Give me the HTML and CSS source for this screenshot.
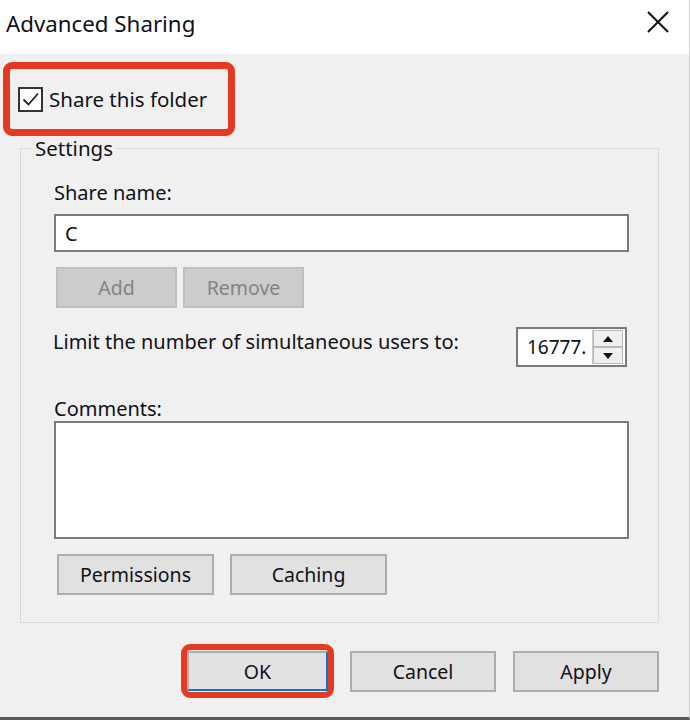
FILE: index.html
```html
<!DOCTYPE html>
<html>
<head>
<meta charset="utf-8">
<title>Advanced Sharing</title>
<link rel="stylesheet" href="styles.css">
</head>
<body>
<div class="dialog">
  <div class="titlebar">
    <span class="title">Advanced Sharing</span>
    <svg class="close" width="22" height="22" viewBox="0 0 22 22"><path d="M1 1 L21 21 M21 1 L1 21" stroke="#111" stroke-width="2" fill="none"/></svg>
  </div>
  <div class="body">
    <div class="highlight share-box">
      <span class="checkbox">
        <svg width="21" height="21" viewBox="0 0 21 21"><path d="M3.5 10.5 L8.5 15.5 L18 4.5" stroke="#222" stroke-width="1.8" fill="none"/></svg>
      </span>
      <span class="share-label">Share this folder</span>
    </div>
    <fieldset class="group">
      <legend>Settings</legend>
      <div class="label share-name">Share name:</div>
      <div class="textbox">C</div>
      <div class="btn-row">
        <span class="btn disabled">Add</span>
        <span class="btn disabled">Remove</span>
      </div>
      <div class="limit-row">
        <span class="label limit-label">Limit the number of simultaneous users to:</span>
        <div class="spinner">
          <span class="spin-value">16777.</span>
          <span class="spin-btns">
            <span class="spin-btn"><svg width="12" height="8" viewBox="0 0 12 8"><path d="M6 1 L11 7 L1 7 Z" fill="#111"/></svg></span>
            <span class="spin-btn"><svg width="12" height="8" viewBox="0 0 12 8"><path d="M1 1 L11 1 L6 7 Z" fill="#111"/></svg></span>
          </span>
        </div>
      </div>
      <div class="label comments">Comments:</div>
      <div class="textarea"></div>
      <div class="btn-row lower">
        <span class="btn wide">Permissions</span>
        <span class="btn wide">Caching</span>
      </div>
    </fieldset>
    <div class="footer">
      <div class="highlight ok-box"><span class="btn default">OK</span></div>
      <span class="btn action">Cancel</span>
      <span class="btn action">Apply</span>
    </div>
  </div>
</div>
</body>
</html>
```

FILE: styles.css
```css
html, body {
  margin: 0;
  padding: 0;
  background: #f0f0f0;
}
body {
  font-family: "Noto Sans", "Open Sans", sans-serif;
  color: #101018;
  font-size: 19px;
}
.dialog {
  width: 689px;
  height: 717px;
  border-right: 1px solid #cfcfcf;
  border-bottom: 3px solid #5a5a5a;
  background: #f0f0f0;
  display: flex;
  flex-direction: column;
}
.titlebar {
  height: 54px;
  background: #ffffff;
  display: flex;
  align-items: center;
  justify-content: space-between;
  padding: 0 20px 0 6px;
}
.title {
  font-size: 22.3px;
  margin-top: -7px;
}
.close {
  margin-top: -10px;
}
.body {
  display: flex;
  flex-direction: column;
  flex: 1;
}
.highlight {
  border: 7px solid #e43a22;
  border-radius: 9px;
  box-sizing: border-box;
}
.share-box {
  margin: 8px 0 0 3px;
  width: 232px;
  height: 74px;
  display: flex;
  align-items: center;
  padding-left: 8px;
  gap: 6px;
}
.checkbox {
  width: 25px;
  height: 25px;
  box-sizing: border-box;
  border: 2px solid #333;
  background: #fff;
  display: flex;
  align-items: center;
  justify-content: center;
}
.share-label {
  font-size: 20.5px;
}
.group {
  margin: -1px 30px 0 20px;
  border: 1px solid #d9d9d9;
  padding: 0 29px 0 33px;
  height: 488px;
  box-sizing: border-box;
  display: flex;
  flex-direction: column;
}
.group legend {
  padding: 0 3px;
  margin-left: -22px;
  font-size: 20.5px;
  line-height: 26px;
}
.label {
  font-size: 20px;
  line-height: 24px;
}
.share-name {
  margin-top: 20px;
}
.textbox {
  margin-top: 9px;
  height: 38px;
  box-sizing: border-box;
  border: 2px solid #7a7a7a;
  background: #fff;
  padding-left: 9px;
  display: flex;
  align-items: center;
  font-size: 20px;
}
.btn-row {
  display: flex;
  gap: 6px;
  margin-top: 15px;
  padding-left: 2px;
}
.btn {
  display: flex;
  align-items: center;
  justify-content: center;
  box-sizing: border-box;
  border: 2px solid #adadad;
  background: #e1e1e1;
  font-size: 19.5px;
}
.btn.disabled {
  width: 121px;
  height: 41px;
  background: #cccccc;
  border-color: #bfbfbf;
  color: #838383;
}
.limit-row {
  display: flex;
  align-items: flex-start;
  justify-content: space-between;
  margin-top: 19px;
  padding-right: 2px;
}
.limit-label {
  margin-top: 3px;
  margin-left: -1px;
}
.spinner {
  width: 111px;
  height: 40px;
  box-sizing: border-box;
  border: 2px solid #7a7a7a;
  background: #fff;
  display: flex;
  align-items: center;
  justify-content: space-between;
  padding: 0 2px 0 9px;
}
.spin-value {
  font-size: 19px;
}
.spin-btns {
  display: flex;
  flex-direction: column;
  height: 34px;
  width: 30px;
  border-left: 1px solid #c8c8c8;
}
.spin-btn {
  flex: 1;
  display: flex;
  align-items: center;
  justify-content: center;
  background: #f0f0f0;
  border: 1px solid #b9b9b9;
}
.comments {
  margin-top: 30px;
}
.textarea {
  margin-top: 0;
  height: 118px;
  box-sizing: border-box;
  border: 2px solid #7a7a7a;
  background: #fff;
}
.btn-row.lower {
  margin-top: 15px;
  gap: 16px;
  padding-left: 3px;
}
.btn.wide {
  width: 157px;
  height: 41px;
}
.footer {
  display: flex;
  align-items: center;
  margin-top: 21px;
  padding-left: 181px;
}
.ok-box {
  width: 153px;
  height: 54px;
  padding: 0;
  display: flex;
  align-items: center;
  justify-content: center;
  border-width: 6px;
}
.btn.default {
  width: 141px;
  height: 40px;
  border: 2px solid #0078d7;
  border-color: #adadad #0078d7 #0078d7 #adadad;
}
.btn.action {
  width: 146px;
  height: 41px;
}
.footer .btn.action:first-of-type {
  margin-left: 16px;
}
.footer .btn.action + .btn.action {
  margin-left: 17px;
}
```
